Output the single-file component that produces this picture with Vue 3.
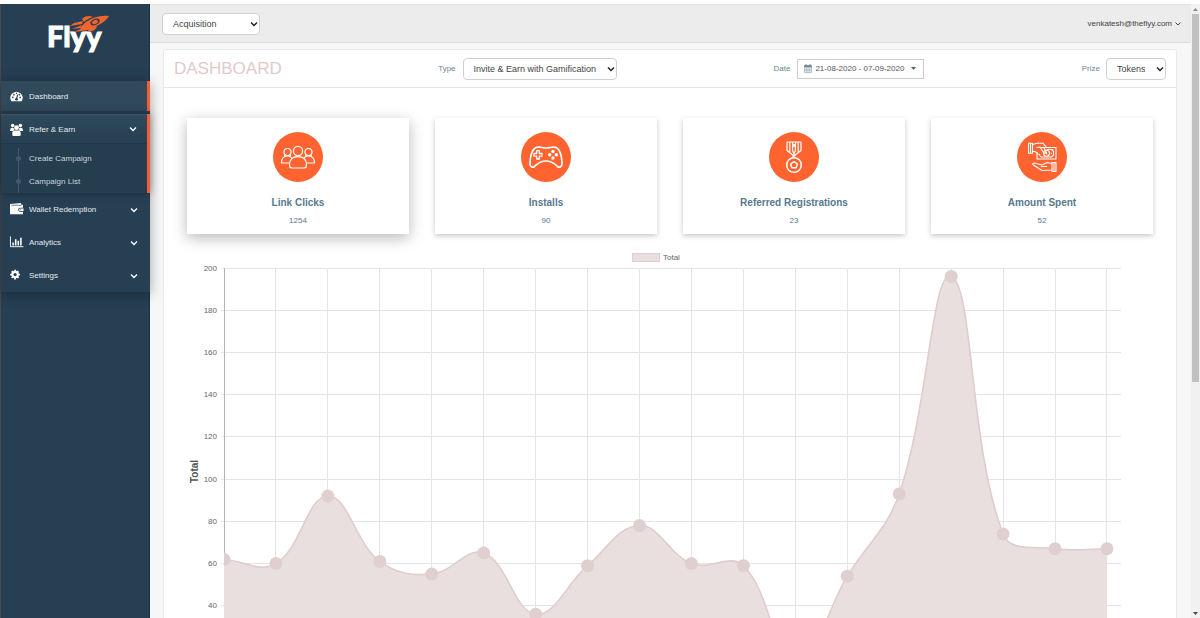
<script setup>
import { ref } from 'vue'

const workspace = ref('Acquisition')
const campaignType = ref('Invite & Earn with Gamification')
const prize = ref('Tokens')

const cards = [
  { id: 'clicks', title: 'Link Clicks', value: '1254' },
  { id: 'installs', title: 'Installs', value: '90' },
  { id: 'registrations', title: 'Referred Registrations', value: '23' },
  { id: 'spent', title: 'Amount Spent', value: '52' },
]

const values = [62, 60, 92, 61, 55, 65, 36, 59, 78, 60, 59, 12, 54, 93, 196, 74, 67, 67]
const area = { left: 37, right: 934, top: 22, step: 51.94, unit: 2.111 }
const bottom = area.top + 200 * area.unit

const points = values.map((v, i) => ({
  x: area.left + i * area.step,
  y: area.top + (200 - v) * area.unit,
}))
const yTicks = Array.from({ length: 9 }, (_, i) => ({
  label: 200 - i * 20,
  y: Math.round(area.top + i * 20 * area.unit - 0.5) + 0.5,
}))
const xLines = points.map((p) => Math.floor(p.x) + 0.5)

// Smooths the line with control points weighted by the distance to each neighbour
function controls(i) {
  const cur = points[i]
  const prev = points[i - 1] || cur
  const next = points[i + 1] || cur
  const a = Math.hypot(cur.x - prev.x, cur.y - prev.y)
  const b = Math.hypot(next.x - cur.x, next.y - cur.y)
  const fa = (0.4 * a) / (a + b)
  const fb = (0.4 * b) / (a + b)
  const dx = next.x - prev.x
  const dy = next.y - prev.y
  const cap = (y) => Math.min(bottom, Math.max(area.top, y))
  return {
    before: `${cur.x - fa * dx} ${cap(cur.y - fa * dy)}`,
    after: `${cur.x + fb * dx} ${cap(cur.y + fb * dy)}`,
  }
}
const linePath = points
  .map((p, i) =>
    i === 0
      ? `M${p.x} ${p.y}`
      : `C${controls(i - 1).after} ${controls(i).before} ${p.x} ${p.y}`
  )
  .join(' ')
const areaPath = `${linePath} L${points[17].x} ${bottom} L${area.left} ${bottom} Z`
</script>

<template>
  <div class="app">
    <aside class="sidebar">
      <a class="logo" href="#" aria-label="Flyy home">
        <svg width="64" height="46" viewBox="0 0 64 46">
          <text class="logo-text" x="0" y="35">Flyy</text>
          <g fill="#f4642f">
            <path d="M62 4C54 3 46 5 39 10C36 12 34 15 33 18C36 20 42 18 48 15C54 12 60 8 62 4Z" />
            <path d="M46 5C42 3 38 4 35 7L37 10C39 8 42 6 46 5ZM50 14C49 18 46 20 41 19L42 17Z" />
            <path d="M36 9L27 11L23 14L35 12ZM35 13L25 17L34 16ZM34 17L26 20L35 19Z" />
          </g>
          <ellipse cx="48" cy="10" rx="5" ry="3" fill="#263f52" transform="rotate(-24 48 10)" />
          <ellipse cx="48" cy="10" rx="3" ry="2" fill="#f4642f" transform="rotate(-24 48 10)" />
        </svg>
      </a>

      <nav class="menu">
        <a class="item active dashboard" href="#">
          <svg class="icon" viewBox="0 0 14 14">
            <path fill="#fff" d="M1.500 12A6.500 6.500 0 1 1 12.500 12Z" />
            <path stroke="#2f485a" stroke-width="1.300" fill="none" d="M7 10L8.200 5" />
            <g fill="#2f485a"><circle cx="7" cy="10" r="1.500" /><circle cx="3" cy="8" r=".9" /><circle cx="4.200" cy="5" r=".9" /><circle cx="7" cy="3.500" r=".8" /><circle cx="10.200" cy="5" r=".9" /><circle cx="11" cy="8" r=".9" /></g>
          </svg>
          <span>Dashboard</span>
        </a>
        <div class="group">
          <a class="item refer" href="#">
            <svg class="icon" viewBox="0 0 14 14" fill="#fff">
              <circle cx="2.800" cy="2.800" r="1.900" /><circle cx="11.200" cy="2.800" r="1.900" /><circle cx="7" cy="5" r="2.600" />
              <path d="M0 8Q0 5.200 2 5.200L4 5.500Q4 7 4.700 7.600L3 8.500H0ZM14 8Q14 5.200 12 5.200L10 5.500Q10 7 9.300 7.600L11 8.500H14ZM2.500 13V11Q2.500 8 5 8H9Q11.500 8 11.500 11V13Q11.500 14 10 14H4Q2.500 14 2.500 13Z" />
            </svg>
            <span>Refer &amp; Earn</span>
            <svg class="chev" viewBox="0 0 8 6"><path d="M1 1.500L4 4.500L7 1.500" /></svg>
          </a>
          <ul class="submenu">
            <li><a href="#">Create Campaign</a></li>
            <li><a href="#">Campaign List</a></li>
          </ul>
        </div>
        <a class="item" href="#">
          <svg class="icon" viewBox="0 0 14 14">
            <path fill="#fff" d="M0 1L12 0V2H14V5H11A2.200 2.200 0 0 0 11 9.400H14V12H0Z" />
            <path stroke="#263f52" stroke-width=".7" d="M1.500 2.400H12.500" />
            <path fill="#fff" d="M11 5.900H14.600V8.500H11A1.300 1.300 0 0 1 11 5.900Z" /><circle cx="11.500" cy="7.200" r=".6" fill="#263f52" />
          </svg>
          <span>Wallet Redemption</span>
          <svg class="chev" viewBox="0 0 8 6"><path d="M1 1.500L4 4.500L7 1.500" /></svg>
        </a>
        <a class="item" href="#">
          <svg class="icon" viewBox="0 0 14 14">
            <path stroke="#fff" fill="none" d="M.5 .5V11.500H14.500" />
            <path fill="#fff" d="M2.500 7H4.200V10.300H2.500ZM5.300 3.500H7V10.300H5.300ZM8.100 5.200H9.800V10.300H8.100ZM10.900 2H12.600V10.300H10.900Z" />
          </svg>
          <span>Analytics</span>
          <svg class="chev" viewBox="0 0 8 6"><path d="M1 1.500L4 4.500L7 1.500" /></svg>
        </a>
        <a class="item" href="#">
          <svg class="icon" viewBox="0 0 14 14">
            <circle cx="5.500" cy="6" r="2.900" fill="none" stroke="#fff" stroke-width="2.200" />
            <path stroke="#fff" stroke-width="2" d="M5.500 .8V2.800M5.500 9.200V11.200M.3 6H2.300M8.700 6H10.700M1.900 2.400L3.200 3.700M7.800 8.300L9.100 9.600M9.100 2.400L7.800 3.700M3.200 8.300L1.900 9.600" />
          </svg>
          <span>Settings</span>
          <svg class="chev" viewBox="0 0 8 6"><path d="M1 1.500L4 4.500L7 1.500" /></svg>
        </a>
      </nav>
    </aside>

    <div class="page">
      <header class="topbar">
        <div class="select acquisition">
          <select v-model="workspace" aria-label="Workspace">
            <option>Acquisition</option>
            <option>Engagement</option>
          </select>
          <svg class="arrow" viewBox="0 0 8 6"><path d="M1 1.500L4 4.500L7 1.500" /></svg>
        </div>
        <button class="account" type="button">
          venkatesh@theflyy.com
          <svg width="6" height="4" viewBox="0 0 6 4"><path d="M.5 .5L3 3L5.500 .5" fill="none" stroke="#444" /></svg>
        </button>
      </header>

      <main class="panel">
        <div class="panel-head">
          <h1>DASHBOARD</h1>
          <div class="field type">
            <label for="type">Type</label>
            <div class="select">
              <select id="type" v-model="campaignType">
                <option>Invite &amp; Earn with Gamification</option>
                <option>Invite &amp; Earn</option>
              </select>
              <svg class="arrow" viewBox="0 0 8 6"><path d="M1 1.500L4 4.500L7 1.500" /></svg>
            </div>
          </div>
          <div class="field date">
            <label for="range">Date</label>
            <button id="range" class="range" type="button">
              <svg width="8" height="9" viewBox="0 0 8 9">
                <path d="M.5 1.500H7.500V8.500H.5ZM.5 3.500H7.500M.5 5.200H7.500M.5 6.800H7.500M2.800 3.500V8.500M5.200 3.500V8.500" fill="none" stroke="#8ba0af" stroke-width=".6" />
                <path d="M.2 1.200H7.800V3H.2ZM1.500 0H2.500V2H1.500ZM5.500 0H6.500V2H5.500Z" fill="#6b8799" />
              </svg>
              <span>21-08-2020 - 07-09-2020</span>
              <svg width="5" height="3" viewBox="0 0 5 3"><path d="M0 0H5L2.500 3Z" fill="#466a82" /></svg>
            </button>
          </div>
          <div class="field prize">
            <label for="prize">Prize</label>
            <div class="select">
              <select id="prize" v-model="prize">
                <option>Tokens</option>
                <option>Cash</option>
              </select>
              <svg class="arrow" viewBox="0 0 8 6"><path d="M1 1.500L4 4.500L7 1.500" /></svg>
            </div>
          </div>
        </div>

        <section class="cards">
          <article v-for="card in cards" :key="card.id" class="card" :class="card.id">
            <svg class="badge" viewBox="0 0 50 50" fill="none" stroke="#fff" stroke-width="1.200" stroke-linejoin="round">
              <circle cx="25" cy="25" r="25" fill="#ff632f" stroke="none" />
              <g v-if="card.id === 'clicks'">
                <circle cx="25" cy="19" r="4.600" />
                <path d="M19 36Q16.500 36 16.500 33C16.500 27.500 19.500 24.700 25 24.700S33.500 27.500 33.500 33Q33.500 36 31 36Z" />
                <circle cx="14.500" cy="20" r="3.500" /><circle cx="35.500" cy="20" r="3.500" />
                <path d="M16.500 31H8.500C8.500 26.500 10 24 14.500 24Q17.500 24 19 26M33.500 31H41.500C41.500 26.500 40 24 35.500 24Q32.500 24 31 26M12 22.500L11.500 24.500M17 22.500L17.500 24.500M33 22.500L32.500 24.500M38 22.500L38.500 24.500" />
              </g>
              <g v-else-if="card.id === 'installs'" stroke-width="1.700">
                <path d="M17 15.200C20 14.800 21 16 25 16S30 14.800 33 15.200C38 15.500 40.500 22 41 31C41.200 35 38.500 36 36.500 34.500C33.500 32 31.500 29 25 29S16.500 32 13.500 34.500C11.500 36 8.800 35 9 31C9.500 22 12 15.500 17 15.200Z" />
                <path stroke-width="1.300" d="M15.700 18.700H18.300V21.500H21V24.200H18.300V27H15.700V24.200H13V21.500H15.700Z" />
                <g fill="#fff" stroke="none"><circle cx="32" cy="19.500" r="1.700" /><circle cx="32" cy="26" r="1.700" /><circle cx="28.700" cy="22.800" r="1.700" /><circle cx="35.300" cy="22.800" r="1.700" /></g>
              </g>
              <g v-else-if="card.id === 'registrations'">
                <path d="M18 10H32V18.500L25 24L18 18.500ZM20.800 10V20M23.600 10V18.500L25 22L26.400 18.500V10M29.200 10V20M25 12V15" />
                <path d="M23.300 22.500L26.700 25.500M26.700 22.500L23.300 25.500" />
                <circle cx="25" cy="33" r="7.300" stroke-width="1.500" />
                <path stroke-width="1.400" d="M25 29.700L28.400 32L27.200 35.800H22.800L21.600 32Z" />
              </g>
              <g v-else stroke-width="1.100">
                <path d="M11.500 11.300H15.500V21.300H11.500ZM13.500 11.300V21.300M15.500 12.500L20 11.200H26L29.500 15.500M15.500 19.500H18L21.500 22.500M19.500 15.500L23 15L26.500 20.500Q28.500 22 29 20L26.500 15" />
                <path d="M24 15.500H39V27H20V20M36.500 17.500H30L34.500 17.500L36.500 19.500V23L34.500 25H24L22.500 23V22" />
                <circle cx="29.500" cy="21.200" r="3" /><path d="M29.500 20V22.500M33.800 21.200H35" />
                <path d="M35 30.500H39V39.500H35ZM37 30.500V39.500M35 31.500L30 30.500L25 33L17 31Q14.500 31.500 16.500 33L25 38.500L35 38M24 34.500H30" />
              </g>
            </svg>
            <h2>{{ card.title }}</h2>
            <p>{{ card.value }}</p>
          </article>
        </section>

        <svg class="chart" viewBox="0 0 966 470" role="img" aria-label="Total per day">
          <defs>
            <clipPath id="plot"><rect x="37" y="0" width="929" height="470" /></clipPath>
          </defs>
          <rect x="445.500" y="7.500" width="27" height="8" fill="#e9dfdf" stroke="#dfcfcf" />
          <text class="tick" x="476" y="14">Total</text>
          <g stroke="#e5e5e5">
            <line v-for="t in yTicks" :key="t.label" x1="34" :x2="area.right" :y1="t.y" :y2="t.y" />
            <line v-for="x in xLines" :key="x" :x1="x" :x2="x" :y1="area.top" :y2="bottom" />
          </g>
          <path :d="areaPath" fill="#e9dfdf" />
          <line x1="37.500" x2="37.500" :y1="area.top" y2="310" stroke="#b3b3b3" />
          <g clip-path="url(#plot)">
            <path :d="linePath" fill="none" stroke="#dfcdcd" stroke-width="1.600" />
            <circle v-for="p in points" :key="p.x" :cx="p.x" :cy="p.y" r="6.500" fill="#dfcfcf" />
          </g>
          <text v-for="t in yTicks" :key="t.label" class="tick" x="30" :y="t.y + 2" text-anchor="end">{{ t.label }}</text>
          <text class="axis" transform="translate(11 237) rotate(-90)">Total</text>
        </svg>
      </main>
    </div>

    <div class="scrollbar" aria-hidden="true">
      <svg viewBox="0 0 9 10"><path d="M2 7L4.500 4L7 7Z" fill="#8a8a8a" /></svg>
      <div class="thumb"></div>
      <svg class="down" viewBox="0 0 9 10"><path d="M2 4H7L4.500 7Z" fill="#444" /></svg>
    </div>
  </div>
</template>

<style>
html, body { height: 100%; overflow: hidden; }
</style>

<style scoped>
.app {
  display: flex;
  height: 100vh;
  box-sizing: border-box;
  padding-top: 4px;
  overflow: hidden;
  background: #fefefe;
  color: #333;
  font: 8px/12px "Liberation Sans", Arial, sans-serif;
}
.app * { box-sizing: border-box; }
a { color: inherit; text-decoration: none; }
button, select { font: inherit; margin: 0; }
.sidebar {
  flex: 0 0 150px;
  position: relative;
  z-index: 1;
  background: #263f52;
  border-left: 1px solid #4b4650;
  border-right: 1px solid #123449;
}
.logo { display: block; height: 77px; padding: 8px 0 0 46px; }
.logo-text { font: 900 29px "Lato", sans-serif; fill: #fff; stroke: #fff; stroke-width: 1px; }
.menu {
  background: #263f52;
  margin-right: -1px;
  box-shadow: 0 2px 12px rgba(0, 0, 0, .35);
  color: #e4eaee;
}
.item { display: flex; align-items: center; height: 33px; padding: 0 12px 0 9px; }
.item span { flex: 1; margin-left: 6px; }
.active span, .refer span { padding-top: 2px; }
.icon { width: 13px; height: 13px; overflow: visible; }
.chev { width: 8px; height: 6px; fill: none; stroke: #fff; stroke-width: 1.3; }
.active { height: 30px; background: #30495b; border-right: 3px solid #f35d35; }
.group {
  margin-top: 3px;
  border-right: 3px solid #f35d35;
  background: #243e50;
  box-shadow: 0 0 8px rgba(0, 0, 0, .35);
}
.refer {
  height: 30px;
  padding-right: 10px;
  border-top: 1px solid #3c5567;
  border-bottom: 1px solid #1e3749;
  background: linear-gradient(#2e4a5b, #263f52);
}
.submenu { list-style: none; margin: 0 0 0 16px; padding: 3px 0 0; color: #c9d4db; position: relative; }
.submenu::before { content: ""; position: absolute; left: 1px; top: 4px; bottom: 0; width: 1px; background: #41596a; }
.submenu li { display: flex; align-items: center; height: 23px; }
.submenu li::before { content: ""; width: 5px; height: 5px; border-radius: 50%; background: #41596a; position: relative; left: -1px; }
.submenu a { margin-left: 7px; }

.page { flex: 1; min-width: 0; background: #f7f7f7; }
.topbar {
  display: flex;
  align-items: center;
  justify-content: space-between;
  height: 39px;
  padding: 0 10px 0 12px;
  background: #ececec;
  border-top: 1px solid #e3e3e3;
  border-bottom: 1px solid #dcdcdc;
}
.select { position: relative; }
.select select {
  appearance: none;
  width: 100%;
  height: 22px;
  padding: 0 20px 0 10px;
  border: 1px solid #cfcfcf;
  border-radius: 4px;
  background: #fff;
  color: #444;
  font-size: 9px;
}
.arrow {
  position: absolute;
  right: 2px;
  top: 8px;
  width: 8px;
  height: 6px;
  fill: none;
  stroke: #222;
  stroke-width: 1.5;
  pointer-events: none;
}
.acquisition { width: 98px; }
.account { display: flex; align-items: center; gap: 3px; padding: 0; border: 0; background: none; color: #444; }
.panel {
  margin: 6px 14px 0 13px;
  background: #fff;
  border: 1px solid #e9e9e9;
  border-radius: 3px;
}
.panel-head {
  display: flex;
  align-items: center;
  height: 38px;
  padding: 0 10px;
  border-bottom: 1px solid #dfe4ea;
  color: #6b8799;
}
h1 { flex: 264; margin: 0; color: #dfcaca; font-size: 17px; font-weight: 400; line-height: 20px; }
.field { display: flex; align-items: center; }
.type { flex: 335; gap: 7px; }
.type .select { width: 154px; }
.date { flex: 308; gap: 7px; }
.prize { gap: 6px; }
.prize .select { width: 60px; }
.range {
  display: flex;
  align-items: center;
  gap: 3px;
  width: 127px;
  height: 20px;
  padding: 0 7px 0 6px;
  border: 1px solid #ccc;
  background: #fff;
  color: #555;
}
.range span { flex: 1; text-align: left; }
.cards { display: grid; grid-template-columns: repeat(4, 1fr); gap: 26px; padding: 30px 23px 0; }
.card {
  display: flex;
  flex-direction: column;
  align-items: center;
  height: 116px;
  padding-top: 14px;
  background: #fff;
  box-shadow: 0 2px 5px rgba(0, 0, 0, .22);
  color: #58788e;
}
.card.clicks { box-shadow: 0 4px 14px rgba(0, 0, 0, .28); }
.badge { width: 50px; height: 50px; }
h2 { margin: 14px 0 0; font-size: 10px; line-height: 14px; }
.card p { margin: 5px 0 0; }
.chart { display: block; width: calc(100% - 46px); margin: 12px 23px 0; }
.tick { font: 8px "Liberation Sans", Arial, sans-serif; fill: #666; }
.axis { font: bold 10px "Liberation Sans", Arial, sans-serif; fill: #555; }

.scrollbar {
  display: flex;
  flex-direction: column;
  flex: 0 0 9px;
  padding: 0 1px;
  background: #f1f1f1;
}
.scrollbar svg { flex: 0 0 10px; margin: 0 -1px; }
.thumb { height: 60%; background: #c1c1c1; }
.scrollbar .down { margin-top: auto; }
</style>
